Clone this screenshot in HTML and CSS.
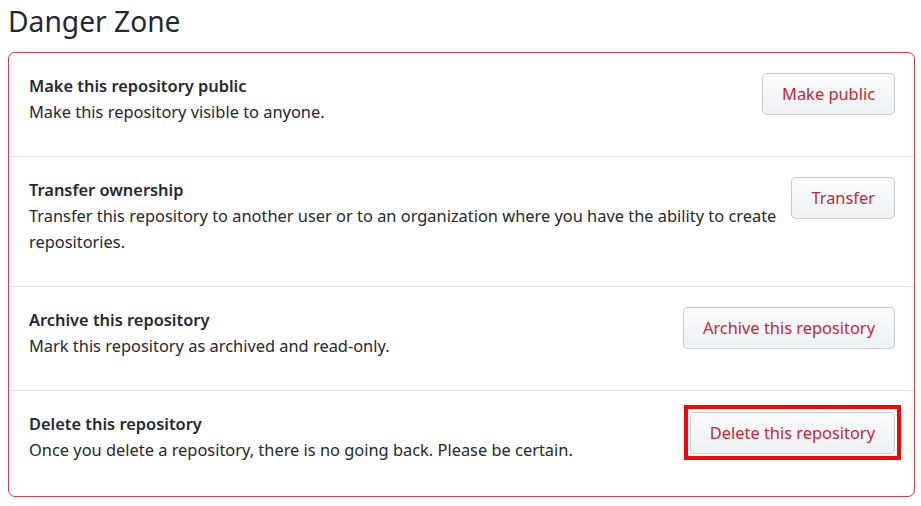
FILE: index.html
```html
<!DOCTYPE html>
<html>
<head>
<meta charset="utf-8">
<link rel="stylesheet" href="styles.css">
</head>
<body>
<h2 class="subhead">Danger Zone</h2>
<div class="box">
  <div class="row">
    <div class="info">
      <div class="title">Make this repository public</div>
      <p class="desc">Make this repository visible to anyone.</p>
    </div>
    <button class="btn">Make public</button>
  </div>
  <div class="row">
    <div class="info">
      <div class="title">Transfer ownership</div>
      <p class="desc">Transfer this repository to another user or to an organization where you have the ability to create repositories.</p>
    </div>
    <button class="btn">Transfer</button>
  </div>
  <div class="row">
    <div class="info">
      <div class="title">Archive this repository</div>
      <p class="desc">Mark this repository as archived and read-only.</p>
    </div>
    <button class="btn">Archive this repository</button>
  </div>
  <div class="row row-last">
    <div class="info">
      <div class="title">Delete this repository</div>
      <p class="desc">Once you delete a repository, there is no going back. Please be certain.</p>
    </div>
    <button class="btn btn-highlight">Delete this repository</button>
  </div>
</div>
</body>
</html>
```
FILE: styles.css
```css
html, body {
  margin: 0;
  padding: 0;
  background: #fff;
}
body {
  padding: 0 6px 0 8px;
  font-family: "Noto Sans", "Open Sans", sans-serif;
  color: #24292e;
  font-size: 16.4px;
}
.subhead {
  margin: 0;
  height: 52px;
  font-size: 28.2px;
  font-weight: 400;
  line-height: 42px;
}
.box {
  border: 1px solid #d73a49;
  border-radius: 7px;
}
.row {
  display: flex;
  align-items: flex-start;
  justify-content: space-between;
  gap: 8px;
  padding: 20px 19px 20px 20px;
  border-top: 1px solid #e1e4e8;
}
.row:first-child {
  border-top: none;
}
.row-last {
  padding-bottom: 22px;
}
.info {
  flex: 1;
}
.title {
  font-weight: 600;
  line-height: 26px;
}
.desc {
  margin: 0 0 11px 0;
  line-height: 26px;
}
.btn {
  position: relative;
  flex: none;
  font-family: inherit;
  font-size: 16.4px;
  line-height: 26px;
  padding: 7px 19px;
  color: #cb2431;
  background: linear-gradient(180deg, #fafbfc 0%, #eff3f6 90%);
  border: 1px solid rgba(27, 31, 35, 0.2);
  border-radius: 5px;
}
.btn-highlight {
  margin-top: 1px;
}
.btn-highlight::after {
  content: "";
  position: absolute;
  left: -7px;
  right: -7px;
  top: -8px;
  bottom: -7px;
  border: 4px solid #ff0000;
  pointer-events: none;
}
```
